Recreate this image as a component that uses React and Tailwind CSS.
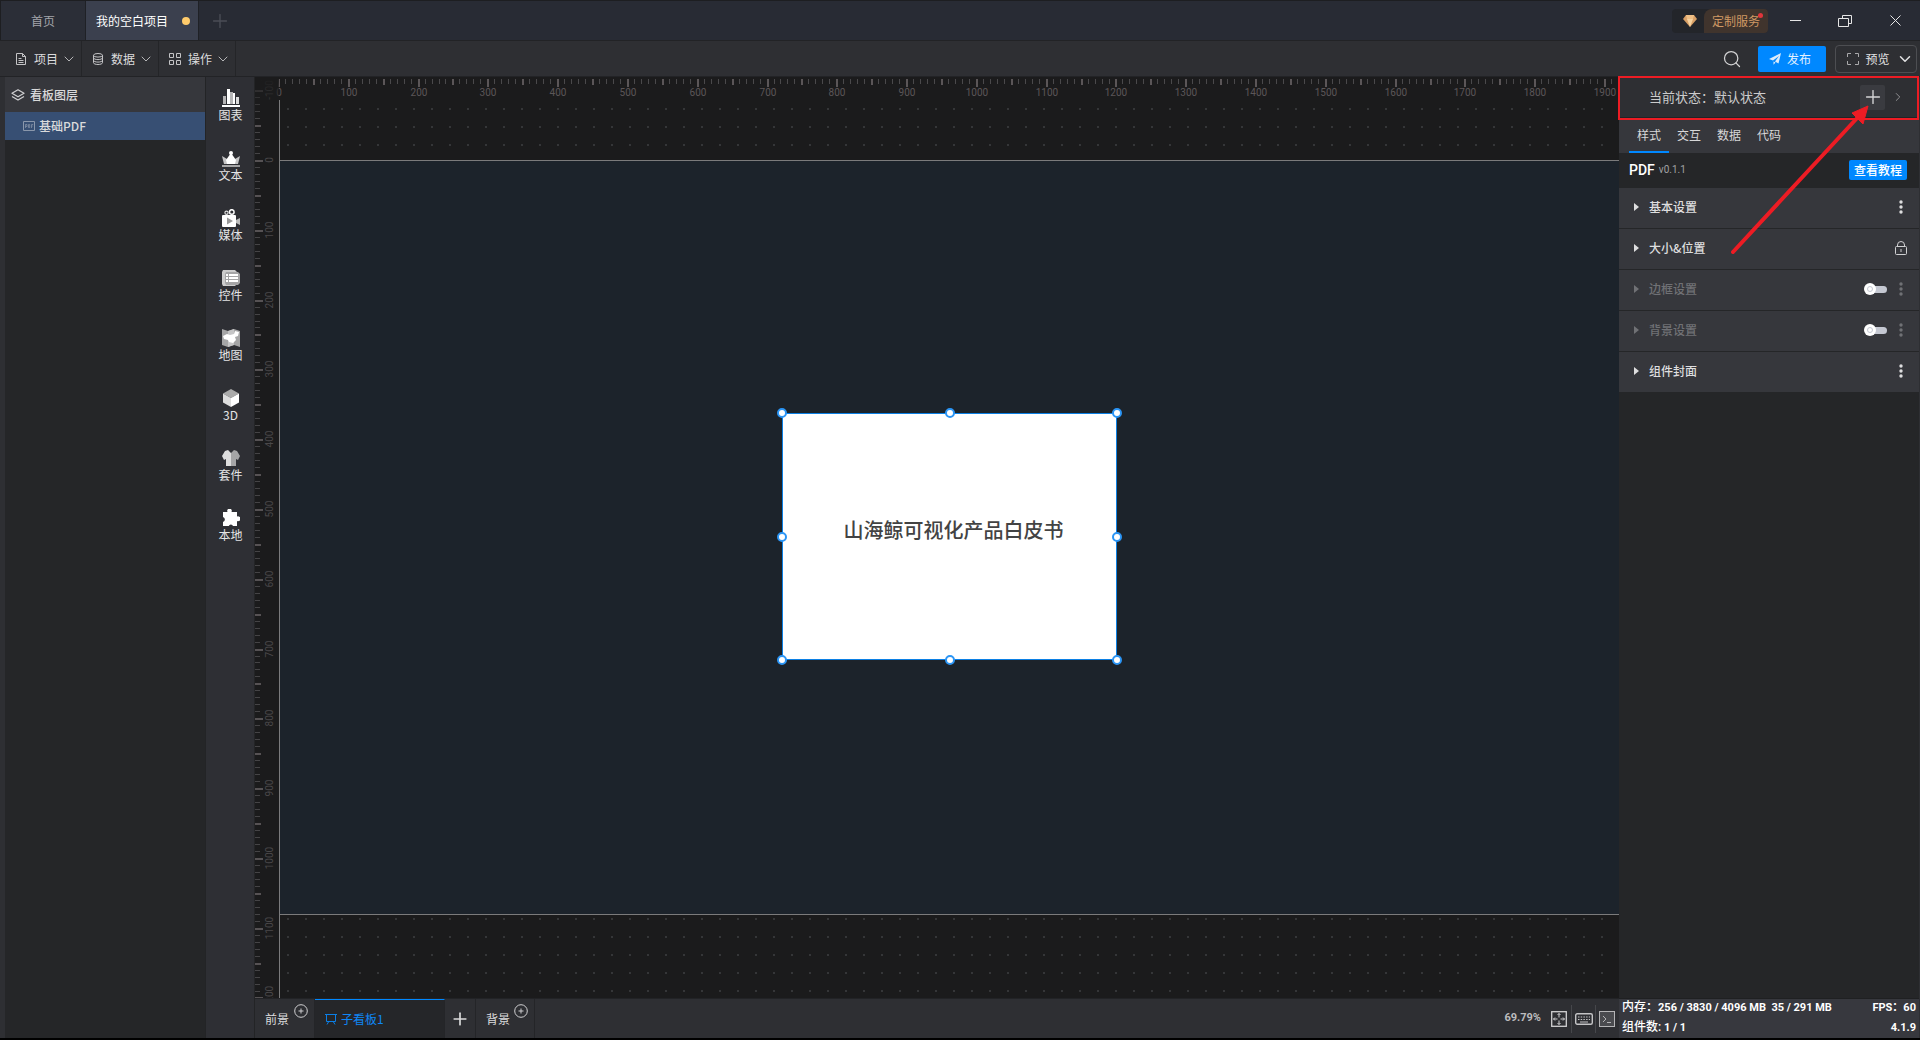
import React, { useState } from 'react';
import { ChevronDown, ChevronRight, Plus, Search } from 'lucide-react';

// 1 canvas unit in screen pixels (69.79% zoom)
const SCALE = 0.6979;

const range = (from, to) => Array.from({ length: to - from + 1 }, (_, i) => from + i);

const tabs = ['样式', '交互', '数据', '代码'];

const sections = [
  { title: '基本设置', enabled: true, action: 'more' },
  { title: '大小&位置', enabled: true, action: 'lock' },
  { title: '边框设置', enabled: false, action: 'more' },
  { title: '背景设置', enabled: false, action: 'more' },
  { title: '组件封面', enabled: true, action: 'more' },
];

const handles = [
  '-left-[6px] -top-[6px]',
  'left-1/2 -ml-[5px] -top-[6px]',
  '-right-[6px] -top-[6px]',
  '-left-[6px] top-1/2 -mt-[5px]',
  '-right-[6px] top-1/2 -mt-[5px]',
  '-left-[6px] -bottom-[6px]',
  'left-1/2 -ml-[5px] -bottom-[6px]',
  '-right-[6px] -bottom-[6px]',
];

/* ---------- icons ---------- */

const FileIcon = () => (
  <svg width="12" height="12" viewBox="0 0 12 12" fill="none" stroke="#c4c4c6">
    <path d="M1.5.5h6l3 3v8h-9zM7.5.5v3h3M3.5 5.5h3M3.5 7.5h5M3.5 9.5h5" />
  </svg>
);

const DatabaseIcon = () => (
  <svg width="12" height="12" viewBox="0 0 12 12" fill="none" stroke="#c4c4c6">
    <ellipse cx="6" cy="2.3" rx="4.5" ry="1.8" />
    <path d="M1.5 2.3v7.4c0 1 2 1.8 4.5 1.8s4.5-.8 4.5-1.8V2.3M1.5 4.8c0 1 2 1.8 4.5 1.8s4.5-.8 4.5-1.8M1.5 7.3c0 1 2 1.8 4.5 1.8s4.5-.8 4.5-1.8" />
  </svg>
);

const GridIcon = () => (
  <svg width="12" height="12" viewBox="0 0 12 12" fill="none" stroke="#c4c4c6">
    <path d="M.5.5h4v4h-4zM7.5.5h4v4h-4zM.5 7.5h4v4h-4zM7.5 7.5h4v4h-4z" />
  </svg>
);

const LayersIcon = () => (
  <svg width="14" height="12" viewBox="0 0 14 12" fill="none" stroke="#cfcfd1" strokeWidth="1.3" strokeLinejoin="round">
    <path d="M7 .8l6 3.500-6 3.500-6-3.500z" />
    <path d="M1 7.500L7 11l6-3.500" />
  </svg>
);

const PdfIcon = () => (
  <svg width="12" height="10" viewBox="0 0 12 10" fill="none" stroke="#8a97ab">
    <path d="M.5.5h11v9H.5z" />
    <path d="M2.5 7V3.5H4v2H2.5M5.5 3.5v3h1.2v-3zM8.5 7V3.5h1.7M8.5 5h1.2" strokeWidth=".7" />
  </svg>
);

const ChartIcon = () => (
  <svg width="18" height="18" viewBox="0 0 18 18">
    <path d="M0 16h18v2H0z" fill="#fff" />
    <path d="M1 7h3v8H1zM8 3h3v12H8z" fill="#b5b5b6" />
    <path d="M5 0h3v15H5zM11 4h2v11h-2z" fill="#fff" />
    <path d="M14 8h3v7h-3z" fill="#ddd" />
  </svg>
);

const TextIcon = () => (
  <svg width="18" height="18" viewBox="0 0 18 18">
    <path d="M0 7l5 3 1 5H2zM18 7l-5 3-1 5h4z" fill="#c5c5c6" />
    <path d="M9 4l5 7-1 4H5l-1-4z" fill="#fff" />
    <circle cx="9" cy="4" r="2" fill="#fff" />
    <path d="M0 16h18v2H0z" fill="#a5a5a6" />
  </svg>
);

const MediaIcon = () => (
  <svg width="18" height="18" viewBox="0 0 18 18">
    <circle cx="4.500" cy="3.800" r="1.600" fill="none" stroke="#ddd" strokeWidth="1.2" />
    <circle cx="9.800" cy="3" r="2.300" fill="none" stroke="#fff" strokeWidth="1.5" />
    <rect y="6" width="14" height="12" rx="1" fill="#fff" />
    <path d="M14 11l4-2v7l-4-2z" fill="#bbb" />
    <path d="M5 8.500l6 3.500-6 3.500z" fill="#999" />
  </svg>
);

const ControlIcon = () => (
  <svg width="18" height="18" viewBox="0 0 18 18">
    <path d="M1 1h12l2 2v12l-2 2H1l-1-2V3z" fill="#ccc" />
    <path d="M4 3h12l2 2v9l-2 2H4l-1-2V5z" fill="#a5a5a6" />
    <path d="M4 5h2v2H4zM4 8h2v2H4zM4 11h2v2H4zM7 5h9v2H7zM7 8h9v2H7zM7 11h9v2H7z" fill="#fff" />
  </svg>
);

const MapIcon = () => (
  <svg width="18" height="18" viewBox="0 0 18 18">
    <path d="M0 0l6 2 6-2 6 2v16l-6-2-6 2-6-2z" fill="#a5a5a6" />
    <path d="M6 2l6-2v16l-6 2z" fill="#c5c5c6" />
    <path d="M1 7l4-2 3 1 4-1 1-3 4 1-1 4-3 1 1 3-3 3-4-1-1-2-4-1z" fill="#fff" />
  </svg>
);

const CubeIcon = () => (
  <svg width="18" height="18" viewBox="0 0 18 18">
    <path d="M9 0l8 4.500L9 9 1 4.500z" fill="#aaa" />
    <path d="M1 4.500L9 9v9l-8-4.500z" fill="#ddd" />
    <path d="M17 4.500L9 9v9l8-4.500z" fill="#fff" />
  </svg>
);

const KitIcon = () => (
  <svg width="18" height="18" viewBox="0 0 18 18">
    <path d="M6 1l3 3v13H4v-7l-2 1-2-4 3-5z" fill="#ddd" />
    <path d="M12 1L9 4v13h5v-7l2 1 2-4-3-5z" fill="#a5a5a6" />
  </svg>
);

const PuzzleIcon = () => (
  <svg width="18" height="18" viewBox="0 0 18 18">
    <path
      d="M1 3h4.500a2.300 2.300 0 1 1 4 0H15v4.500a2.500 2.500 0 1 1 0 4.500v5h-4a2.200 2.200 0 0 0-4.200 0H1v-4a2.600 2.600 0 0 0 0-5z"
      fill="#fff"
    />
  </svg>
);

const DiamondIcon = () => (
  <svg width="14" height="12" viewBox="0 0 14 12">
    <path d="M3 0h8l3 4-7 8-7-8z" fill="#d9a066" />
    <path d="M4 4h6l-3 8z" fill="#f7d3a0" />
    <path d="M3 0h8l-1 4H4z" fill="#efbf85" />
  </svg>
);

const PlaneIcon = () => (
  <svg width="12" height="12" viewBox="0 0 12 12" fill="#dcebfa">
    <path d="M12 0L9.500 10.500 6 8.600 10 3 4 7.600 0 6z" />
    <path d="M4.500 8.500l2 1-2 2.200z" />
  </svg>
);

const FrameIcon = () => (
  <svg width="12" height="12" viewBox="0 0 12 12" fill="none" stroke="#a9a9ab">
    <path d="M.5 4V.5H4M8 .5h3.5V4M11.5 8v3.5H8M4 11.5H.5V8" />
  </svg>
);

const LockIcon = () => (
  <svg width="12" height="14" viewBox="0 0 12 14" fill="none" stroke="#d0d0d2">
    <rect x=".5" y="5.5" width="11" height="8" rx="1" />
    <path d="M2.500 5.500V4a3.500 3.500 0 0 1 7 0v1.500M6 8v3" />
  </svg>
);

const MoreIcon = ({ color }) => (
  <svg width="4" height="14" viewBox="0 0 4 14" fill={color}>
    <circle cx="2" cy="2" r="1.700" />
    <circle cx="2" cy="7" r="1.700" />
    <circle cx="2" cy="12" r="1.700" />
  </svg>
);

const BoardIcon = () => (
  <svg width="12" height="12" viewBox="0 0 12 12" fill="none" stroke="#0b7fe6">
    <path d="M0 1.5h12M1.5 1.5v7h9v-7M3.5 9L2 11.500M8.500 9l1.500 2.500" />
  </svg>
);

const CirclePlus = () => (
  <svg width="14" height="14" viewBox="0 0 14 14" fill="none" stroke="#d0d0d2">
    <circle cx="7" cy="7" r="6.300" />
    <path d="M4.500 7h5M7 4.500v5" />
  </svg>
);

const FitIcon = () => (
  <svg width="16" height="16" viewBox="0 0 16 16" fill="none" stroke="#d0d0d2">
    <rect x=".7" y=".7" width="14.600" height="14.600" strokeWidth="1.3" />
    <path d="M8 2.500v4M8 9.500v4M2.500 8h4M9.500 8h4M6.500 4L8 2.500 9.500 4M6.500 12L8 13.500 9.500 12M4 6.500L2.500 8 4 9.500M12 6.500L13.500 8 12 9.500" />
  </svg>
);

const KeyboardIcon = () => (
  <svg width="18" height="12" viewBox="0 0 18 12" fill="none" stroke="#c4c4c6">
    <rect x=".7" y=".7" width="16.600" height="10.600" rx="1.500" strokeWidth="1.4" />
    <path d="M3 4h12M3 6.500h12" strokeDasharray="1.5 1.2" />
    <path d="M5 9h8" />
  </svg>
);

const ConsoleIcon = () => (
  <svg width="16" height="16" viewBox="0 0 16 16" fill="none" stroke="#b4b4b6">
    <rect x=".5" y=".5" width="15" height="15" fill="#4a4b4f" />
    <path d="M4 5l3 3-3 3M8 11.5h4" />
  </svg>
);

const tools = [
  { label: '图表', Icon: ChartIcon },
  { label: '文本', Icon: TextIcon },
  { label: '媒体', Icon: MediaIcon },
  { label: '控件', Icon: ControlIcon },
  { label: '地图', Icon: MapIcon },
  { label: '3D', Icon: CubeIcon },
  { label: '套件', Icon: KitIcon },
  { label: '本地', Icon: PuzzleIcon },
];

const menus = [
  { label: '项目', Icon: FileIcon },
  { label: '数据', Icon: DatabaseIcon },
  { label: '操作', Icon: GridIcon },
];

/* ---------- header ---------- */

function TitleBar() {
  return (
    <header className="flex h-10 shrink-0 items-stretch border-l border-t border-[#1d1e21] bg-[#282b34] text-xs">
      <button className="w-[85px] border-r border-[#1f2126] bg-[#2b2e37] text-[#a3a5aa]">首页</button>
      <button className="flex w-[112px] items-center justify-between bg-[#3b404e] pl-[10px] pr-2 text-white">
        我的空白项目
        <span className="size-2 rounded-full bg-[#ffcb6b]"></span>
      </button>
      <button aria-label="新建" className="flex w-[42px] items-center justify-center border-l border-[#1f2126] text-[#4b4e56]">
        <Plus size={22} strokeWidth={1.5} />
      </button>
      <div className="ml-auto flex items-center">
        <button className="relative mr-[2px] flex h-6 items-center overflow-hidden rounded-sm bg-[#23252a]">
          <span className="flex w-8 items-center justify-center pl-1"><DiamondIcon /></span>
          <span className="rounded-tl-lg bg-[#40342d] px-2 leading-6 text-[#cf9864]">定制服务</span>
          <span className="absolute right-[5px] top-1 size-[5px] rounded-full bg-[#e0353b]"></span>
        </button>
        <button aria-label="最小化" className="flex h-10 w-[50px] items-center justify-center">
          <span className="h-px w-[11px] bg-[#e6e6e6]"></span>
        </button>
        <button aria-label="还原" className="flex h-10 w-[50px] items-center justify-center">
          <svg width="14" height="12" viewBox="0 0 14 12" fill="none" stroke="#e6e6e6">
            <path d="M.5 3.5h10v8H.5zM4.5 3V.5h9v8H11" />
          </svg>
        </button>
        <button aria-label="关闭" className="flex h-10 w-[50px] items-center justify-center">
          <svg width="11" height="11" viewBox="0 0 11 11" stroke="#e6e6e6">
            <path d="M.5.5l10 10M10.5.5l-10 10" />
          </svg>
        </button>
      </div>
    </header>
  );
}

function Toolbar() {
  return (
    <nav className="flex h-9 shrink-0 items-stretch border-t border-[#222326] bg-[#2e2f33] pl-[5px]">
      {menus.map(({ label, Icon }) => (
        <button key={label} className="flex w-[77px] items-center border-r border-[#242528] pl-[10px] text-xs text-[#dcdcdd]">
          <Icon />
          <span className="ml-[7px]">{label}</span>
          <ChevronDown size={16} strokeWidth={1.5} className="ml-[3px] text-[#b5b5b7]" />
        </button>
      ))}
      <div className="ml-auto flex items-center pr-[3px]">
        <button aria-label="搜索" className="mr-4 text-[#d3d3d4]">
          <Search size={20} strokeWidth={1.5} />
        </button>
        <button className="flex h-[26px] w-[68px] items-center justify-center gap-[6px] rounded-xs bg-[#0088ff] pr-1 text-xs text-[#e3f1ff]">
          <PlaneIcon />
          发布
        </button>
        <button className="ml-[9px] flex h-7 w-[82px] items-center justify-between rounded-sm border border-[#4d4e52] pl-[11px] pr-[2px] text-xs text-[#e2e2e3]">
          <FrameIcon />
          预览
          <ChevronDown size={18} strokeWidth={2} />
        </button>
      </div>
    </nav>
  );
}

/* ---------- left side ---------- */

function LayerPanel() {
  return (
    <aside className="w-[200px] shrink-0 bg-[#252628] text-xs font-medium text-[#dadadb]">
      <h2 className="flex h-[35px] items-center gap-[5px] bg-[#36373c] pl-[6px]">
        <LayersIcon />
        看板图层
      </h2>
      <button className="flex h-7 w-full items-center gap-1 bg-[#374f73] pl-[18px]">
        <PdfIcon />
        基础PDF
      </button>
    </aside>
  );
}

function ToolColumn() {
  return (
    <nav className="w-[50px] shrink-0 border-x border-[#232426] bg-[#2e2f34]">
      {tools.map(({ label, Icon }) => (
        <button key={label} className="flex h-[60px] w-full flex-col items-center pt-3 pl-px text-xs leading-4 text-[#e4e4e5]">
          <Icon />
          {label}
        </button>
      ))}
    </nav>
  );
}

/* ---------- canvas ---------- */

// Every 10 units a tick, longer at 50 and 100
function tickLength(n) {
  if (n % 10 === 0) return 8;
  return n % 5 === 0 ? 6 : 5;
}

function HorizontalRuler() {
  return (
    <svg className="block h-[23px] w-full overflow-visible font-['Roboto',sans-serif] text-[10px]">
      {range(0, 191).map((n) => (
        <rect
          key={n}
          x={Math.round(n * 10 * SCALE) - 1}
          y="2"
          width={n % 5 === 0 ? 2 : 1}
          height={tickLength(n)}
          fill={n % 5 === 0 ? '#5b5658' : '#4a494b'}
        />
      ))}
      {range(0, 19).map((n) => (
        <text key={n} x={Math.round(n * 100 * SCALE)} y="19" textAnchor="middle" fill="#5b5658">
          {n * 100}
        </text>
      ))}
    </svg>
  );
}

function VerticalRuler() {
  const zero = 83;
  return (
    <div className="relative w-6 shrink-0 overflow-hidden">
      <svg className="absolute inset-0 h-full w-full font-['Roboto',sans-serif] text-[10px]">
        {range(-10, 120).map((n) => (
          <rect
            key={n}
            x="0"
            y={zero + Math.round(n * 10 * SCALE)}
            width={tickLength(n)}
            height={n % 5 === 0 ? 2 : 1}
            fill={n % 5 === 0 ? '#565254' : '#454446'}
          />
        ))}
        {range(-1, 12).map((n) => {
          const y = zero + Math.round(n * 100 * SCALE);
          return (
            <text key={n} x="18" y={y} textAnchor="middle" fill="#4a484a" transform={`rotate(-90 18 ${y})`}>
              {n * 100}
            </text>
          );
        })}
      </svg>
      {/* fade over the corner where both rulers meet */}
      <div className="absolute inset-x-0 top-0 h-10 bg-linear-to-b from-[#1b1b1c] to-transparent"></div>
    </div>
  );
}

function Canvas() {
  return (
    <div className="relative min-h-0 flex-1 overflow-hidden border-l border-[#7b7b7c]">
      <svg className="absolute inset-0 h-full w-full">
        <defs>
          <pattern id="dots" x="7" y="8" width="18" height="18" patternUnits="userSpaceOnUse">
            <rect width="2" height="2" fill="#353638" />
          </pattern>
        </defs>
        <rect width="100%" height="100%" fill="url(#dots)" />
      </svg>
      <div className="relative mt-[60px] aspect-[1920/1082] w-full border-y border-[#7b7b7c] bg-[#1c232b]">
        <div className="absolute left-[502px] top-[252px] flex h-[247px] w-[335px] items-center justify-center border border-[#0c80e4] bg-white">
          <h1 className="mb-[14px] ml-2 text-xl font-medium text-[#434343]">山海鲸可视化产品白皮书</h1>
          {handles.map((pos) => (
            <span key={pos} className={`absolute size-[10px] rounded-full border-2 border-[#2b95f5] bg-white ${pos}`}></span>
          ))}
        </div>
      </div>
    </div>
  );
}

function BoardBar() {
  return (
    <footer className="flex h-10 shrink-0 items-stretch border-t border-[#222326] bg-[#2e2f33] text-xs text-[#dcdcdd]">
      <button className="flex w-[60px] items-center border-r border-[#242528] pl-[10px]">
        前景
        <span className="mb-4 ml-[5px]"><CirclePlus /></span>
      </button>
      <button className="flex w-[130px] items-center gap-1 border-r border-t border-r-[#242528] border-t-[#0088ff] bg-[#252629] pl-[10px] text-[#0f86f5]">
        <BoardIcon />
        子看板1
      </button>
      <button aria-label="添加看板" className="flex w-[31px] items-center justify-center border-r border-[#242528]">
        <Plus size={20} strokeWidth={2} />
      </button>
      <button className="flex w-[59px] items-center border-r border-[#242528] pl-[10px]">
        背景
        <span className="mb-4 ml-1"><CirclePlus /></span>
      </button>
      <div className="ml-auto flex items-center pr-1">
        <span className="mr-[10px] font-['Roboto',sans-serif] text-[11px] font-bold text-[#bcbcbe]">69.79%</span>
        <button aria-label="适应画布"><FitIcon /></button>
        <button aria-label="快捷键" className="ml-1 flex h-7 w-[25px] items-center justify-center border-x border-[#46474b]">
          <KeyboardIcon />
        </button>
        <button aria-label="控制台" className="ml-[3px]"><ConsoleIcon /></button>
      </div>
    </footer>
  );
}

/* ---------- right side ---------- */

function Toggle({ label }) {
  const [on, setOn] = useState(false);
  return (
    <label className="relative mr-3 flex h-3 w-[23px] items-center">
      <input type="checkbox" aria-label={label} className="sr-only" checked={on} onChange={(e) => setOn(e.target.checked)} />
      <span className="ml-1 h-[7px] flex-1 rounded-full bg-[#c5c8d2]"></span>
      <span
        className={`absolute flex size-3 items-center justify-center rounded-full bg-white ${on ? 'right-0' : 'left-0'}`}
      >
        <span className="size-[6px] rounded-full border border-[#c5c8d2]"></span>
      </span>
    </label>
  );
}

function Section({ title, enabled, action }) {
  return (
    <section className="mb-px flex h-10 items-center bg-[#36373c] pb-[2px] pl-[15px] pr-3">
      <button className={`flex flex-1 items-center gap-[10px] text-xs font-medium ${enabled ? 'text-[#dededf]' : 'text-[#707175]'}`}>
        <svg width="5" height="8" viewBox="0 0 5 8" fill="currentColor">
          <path d="M0 0l5 4-5 4z" />
        </svg>
        {title}
      </button>
      {!enabled && <Toggle label={title} />}
      {action === 'lock' ? (
        <button aria-label="锁定"><LockIcon /></button>
      ) : (
        <button aria-label="更多" className="mr-1">
          <MoreIcon color={enabled ? '#dededf' : '#707175'} />
        </button>
      )}
    </section>
  );
}

function PropertyPanel() {
  const [active, setActive] = useState('样式');

  return (
    <aside className="relative flex w-[300px] shrink-0 flex-col bg-[#252628]">
      <div className="flex h-[41px] shrink-0 items-center border-b border-[#222326] bg-[#2e2f33] pl-[30px] pr-[14px]">
        <p className="flex-1 text-[13px] text-[#cbcbcc]">当前状态：默认状态</p>
        <button aria-label="添加状态" className="flex size-[25px] items-center justify-center rounded-xs bg-[#3a3b40] text-[#d5d5d6]">
          <Plus size={22} strokeWidth={1.5} />
        </button>
        <button aria-label="展开" className="ml-[6px] text-[#9c9c9e]">
          <ChevronRight size={14} strokeWidth={1.5} />
        </button>
      </div>
      <div className="flex h-[35px] shrink-0 bg-[#36373c] pl-[10px] text-xs">
        {tabs.map((tab) => (
          <button
            key={tab}
            onClick={() => setActive(tab)}
            className={`w-10 border-b-2 text-[#d8d8d9] ${tab === active ? 'border-[#0088ff]' : 'border-transparent'}`}
          >
            {tab}
          </button>
        ))}
      </div>
      <div className="flex h-[35px] shrink-0 items-center pb-[2px] pl-[10px] pr-3">
        <h2 className="font-['Roboto',sans-serif] text-sm font-medium text-white">PDF</h2>
        <span className="ml-1 flex-1 font-['Roboto',sans-serif] text-[10px] text-[#a2a2a4]">v0.1.1</span>
        <a href="#tutorial" className="rounded-xs bg-[#0088ff] px-[5px] text-xs font-medium leading-5 text-white">查看教程</a>
      </div>
      {sections.map((s) => (
        <Section key={s.title} {...s} />
      ))}
      <div className="mt-auto flex h-10 shrink-0 flex-col justify-center border-t border-[#1f2022] bg-[#37383e] px-[3px] pb-px font-['Roboto','Noto_Sans_CJK_SC',sans-serif] text-[11px] font-bold leading-5 text-white">
        <p className="flex justify-between">
          <span><span className="text-xs font-medium">内存：</span>256 / 3830 / 4096 MB&nbsp; 35 / 291 MB</span>
          <span>FPS：60</span>
        </p>
        <p className="flex justify-between">
          <span><span className="text-xs font-medium">组件数:</span> 1 / 1</span>
          <span>4.1.9</span>
        </p>
      </div>
      <Annotation />
    </aside>
  );
}

// Red frame and arrow pointing at the add-state button
function Annotation() {
  return (
    <div className="pointer-events-none absolute inset-x-0 -left-px -top-px z-10 h-11 border-2 border-[#ed1c24]">
      <svg className="absolute right-12 top-6" width="138" height="152" viewBox="0 0 138 152">
        <path d="M2 150L128 14" stroke="#ed1c24" strokeWidth="4" strokeLinecap="round" />
        <path d="M137 4l-5 18-11-11z" fill="#ed1c24" stroke="#ed1c24" strokeLinejoin="round" />
      </svg>
    </div>
  );
}

function App() {
  return (
    <div className="flex h-screen flex-col overflow-hidden border-b-2 border-black bg-[#2e2f33] font-['Noto_Sans_CJK_SC',sans-serif]">
      <TitleBar />
      <Toolbar />
      <main className="flex min-h-0 flex-1 border-t border-[#222326] pl-[5px] pr-px">
        <LayerPanel />
        <ToolColumn />
        <div className="flex min-w-0 flex-1 flex-col">
          <div className="flex min-h-0 flex-1 overflow-hidden bg-[#1b1b1c]">
            <VerticalRuler />
            <div className="flex min-w-0 flex-1 flex-col">
              <HorizontalRuler />
              <Canvas />
            </div>
          </div>
          <BoardBar />
        </div>
        <PropertyPanel />
      </main>
    </div>
  );
}

export default App;
